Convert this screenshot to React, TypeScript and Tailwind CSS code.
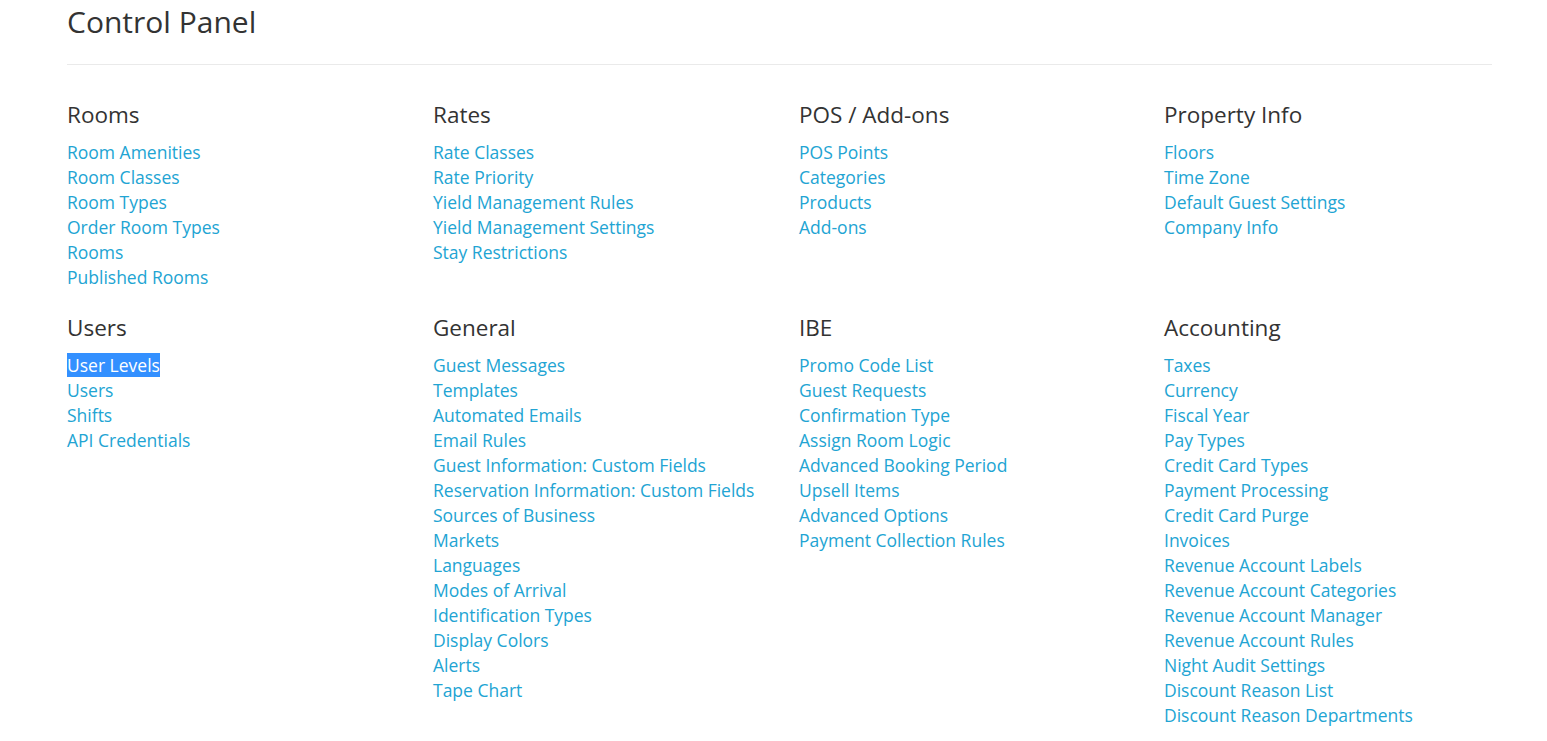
const SECTIONS: { title: string; links: string[] }[] = [
  {
    title: 'Rooms',
    links: ['Room Amenities', 'Room Classes', 'Room Types', 'Order Room Types', 'Rooms', 'Published Rooms'],
  },
  {
    title: 'Rates',
    links: ['Rate Classes', 'Rate Priority', 'Yield Management Rules', 'Yield Management Settings', 'Stay Restrictions'],
  },
  {
    title: 'POS / Add-ons',
    links: ['POS Points', 'Categories', 'Products', 'Add-ons'],
  },
  {
    title: 'Property Info',
    links: ['Floors', 'Time Zone', 'Default Guest Settings', 'Company Info'],
  },
  {
    title: 'Users',
    links: ['User Levels', 'Users', 'Shifts', 'API Credentials'],
  },
  {
    title: 'General',
    links: [
      'Guest Messages',
      'Templates',
      'Automated Emails',
      'Email Rules',
      'Guest Information: Custom Fields',
      'Reservation Information: Custom Fields',
      'Sources of Business',
      'Markets',
      'Languages',
      'Modes of Arrival',
      'Identification Types',
      'Display Colors',
      'Alerts',
      'Tape Chart',
    ],
  },
  {
    title: 'IBE',
    links: [
      'Promo Code List',
      'Guest Requests',
      'Confirmation Type',
      'Assign Room Logic',
      'Advanced Booking Period',
      'Upsell Items',
      'Advanced Options',
      'Payment Collection Rules',
    ],
  },
  {
    title: 'Accounting',
    links: [
      'Taxes',
      'Currency',
      'Fiscal Year',
      'Pay Types',
      'Credit Card Types',
      'Payment Processing',
      'Credit Card Purge',
      'Invoices',
      'Revenue Account Labels',
      'Revenue Account Categories',
      'Revenue Account Manager',
      'Revenue Account Rules',
      'Night Audit Settings',
      'Discount Reason List',
      'Discount Reason Departments',
    ],
  },
];

export default function App() {
  return (
    <div className="min-h-screen bg-white font-['Open_Sans',sans-serif] text-[#333]">
      <div className="ml-[67px] w-[1425px]">
        {/* Header */}
        <h1 className="pt-[5px] text-[30px] leading-[33px] font-normal">Control Panel</h1>
        <div className="mt-[26px] h-px bg-[#eaeaea]" />

        {/* Sections */}
        <div className="mt-[38px] grid grid-cols-[366px_366px_365px_1fr] gap-y-[26px]">
          {SECTIONS.map((section) => (
            <div key={section.title}>
              <h2 className="text-[22.5px] leading-[24px] font-normal mb-[13px]">{section.title}</h2>
              <ul>
                {section.links.map((link) => (
                  <li key={link} className="text-[17.5px] leading-[25px]">
                    {link === 'User Levels' ? (
                      <a href="#" className="bg-[#3390ff] text-white">
                        {link}
                      </a>
                    ) : (
                      <a href="#" className="text-[#22a4d3] hover:underline">
                        {link}
                      </a>
                    )}
                  </li>
                ))}
              </ul>
            </div>
          ))}
        </div>
      </div>
    </div>
  );
}
